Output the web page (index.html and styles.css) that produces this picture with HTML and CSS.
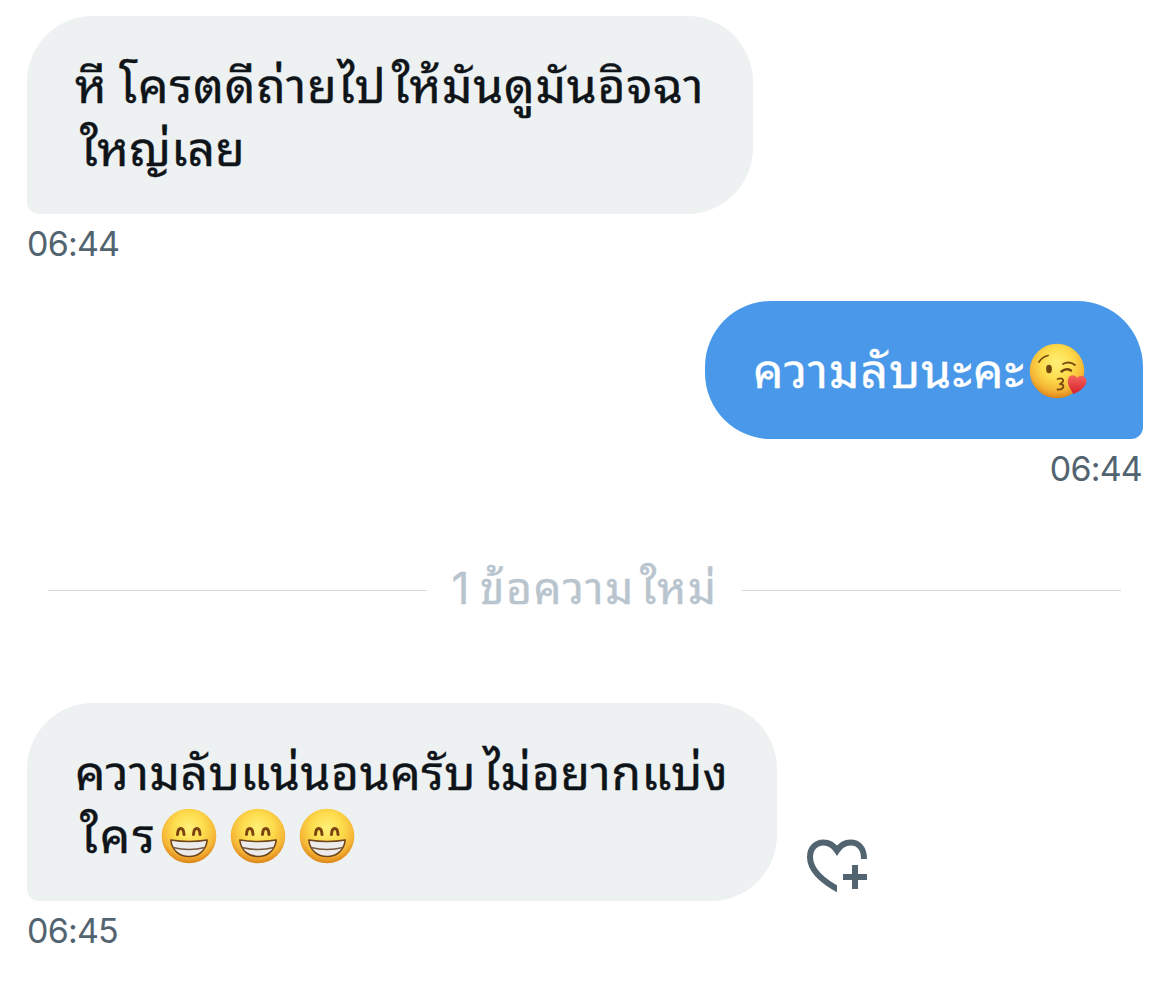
FILE: index.html
```
<!DOCTYPE html>
<html lang="th">
<head>
    <meta charset="UTF-8">
    <meta name="viewport" content="width=device-width, initial-scale=1.0">
    <title>ข้อความ</title>
    <link rel="stylesheet" href="styles.css">
</head>
<body>
    <!-- emoji symbols -->
    <svg class="symbols" width="0" height="0">
        <defs>
            <radialGradient id="face" cx="50%" cy="36%" r="64%">
                <stop offset="0" stop-color="#fff07a"/>
                <stop offset="0.45" stop-color="#fddc4c"/>
                <stop offset="0.78" stop-color="#f5b637"/>
                <stop offset="1" stop-color="#dd8419"/>
            </radialGradient>
            <linearGradient id="heart" x1="0" y1="0" x2="0" y2="1">
                <stop offset="0" stop-color="#f8645c"/>
                <stop offset="1" stop-color="#d3212d"/>
            </linearGradient>
            <clipPath id="heart-cut">
                <path d="M0 0H62V30H30V54H0Z"/>
            </clipPath>
            <symbol id="grin" viewBox="0 0 56 56">
                <circle cx="28" cy="28" r="27.3" fill="url(#face)"/>
                <path d="M16.5 26.5c.5-8 6-8 6.5 0M32.5 26.5c.5-8 6-8 6.5 0" fill="none" stroke="#7b4310" stroke-width="3" stroke-linecap="round"/>
                <path d="M9.8 32Q28 35 46.2 32C45 43 37 48.5 28 48.5S11 43 9.8 32Z" fill="#ececec" stroke="#70451b" stroke-width="1.6" stroke-linejoin="round"/>
                <path d="M12 39.5Q28 43.5 44 39.5" fill="none" stroke="#77583d" stroke-width="1.5"/>
            </symbol>
            <symbol id="kiss" viewBox="0 0 58 56">
                <circle cx="28" cy="28" r="27.3" fill="url(#face)"/>
                <path d="M10 19Q13 14 19 12.5M34 21Q40 17.5 46 22" fill="none" stroke="#7b4a12" stroke-width="1.8" stroke-linecap="round"/>
                <ellipse cx="20" cy="26" rx="2.9" ry="4.2" fill="#714510"/>
                <path d="M32.5 28.5Q37 24.5 42 27.5" fill="none" stroke="#714510" stroke-width="2.5" stroke-linecap="round"/>
                <path d="M28.5 36C35 34 36 38.5 31 41C36.5 41 35 47 28.5 46.5" fill="none" stroke="#7b4a12" stroke-width="1.8" stroke-linecap="round" stroke-linejoin="round"/>
                <path d="M44.5 51C42 47 38 42 39 36.5C40 31.5 46 31 48 35C51 31.5 57 33 57.5 38C57.5 43.5 50 49 44.5 51Z" fill="url(#heart)"/>
            </symbol>
        </defs>
    </svg>

    <main class="conversation">
        <section class="message received">
            <div class="bubble">
                <p class="line line-a"><span>หี โครตดีถ่ายไป<span class="lead">ให้มันดูมันอิจฉา</span></span></p>
                <p class="line line-b"><span class="lead">ใหญ่เลย</span></p>
            </div>
            <time class="time">06:44</time>
        </section>

        <section class="message sent">
            <div class="bubble">
                <p class="line"><span>ความลับนะคะ</span><svg class="emoji kiss" role="img" aria-label="😘"><use href="#kiss"/></svg></p>
            </div>
            <time class="time">06:44</time>
        </section>

        <div class="divider"><span>1 ข้อความ<span class="lead">ใหม่</span></span></div>

        <section class="message received latest">
            <div class="row">
                <div class="bubble">
                    <p class="line line-c"><span>ความลับแน่นอนครับ ไม่อยากแบ่ง</span></p>
                    <p class="line line-d"><span class="lead">ใคร</span><svg class="emoji" role="img" aria-label="😁"><use href="#grin"/></svg><svg class="emoji" role="img" aria-label="😁"><use href="#grin"/></svg><svg class="emoji" role="img" aria-label="😁"><use href="#grin"/></svg></p>
                </div>
                <button class="react" aria-label="+">
                    <svg viewBox="0 0 62 54" width="62" height="54" fill="none" stroke="#536471" stroke-width="6">
                        <path clip-path="url(#heart-cut)" d="M36 53C18 44 3 32 3 18C3 9 9 3.500 16.500 3.500C22.500 3.500 27 7 30 11.500C33 7 37.500 3.500 43.500 3.500C51.500 3.500 57 9 57 20"/>
                        <path d="M48 26V50M36 38H60"/>
                    </svg>
                </button>
            </div>
            <time class="time">06:45</time>
        </section>
    </main>
</body>
</html>
```
FILE: styles.css
```
* {
    box-sizing: border-box;
}
body {
    margin: 0;
    background: #fff;
    color: #0f1419;
    font-family: Inter, Thonburi, "Noto Sans Thai Looped", Loma, Garuda, Waree, Umpush, "Noto Sans", sans-serif;
}
.symbols {
    display: block;
}
.conversation {
    display: flex;
    flex-direction: column;
    padding: 16px 27px 0;
}
.message {
    display: flex;
    flex-direction: column;
    align-items: flex-start;
}
.bubble {
    width: 726px;
    padding: 38px 48px 34px;
    background: #edf1f2;
    border-radius: 66px 66px 66px 12px;
}
.line {
    display: flex;
    align-items: center;
    height: 63px;
    margin: 0;
    font-size: 48px;
    line-height: 63px;
    letter-spacing: 1.1px;
    white-space: nowrap;
    -webkit-text-stroke: 0.4px currentColor;
}
.lead {
    margin-left: 5px;
}
.line-a {
    letter-spacing: 1px;
    word-spacing: -3px;
}
.line-a .lead {
    letter-spacing: 0.8px;
}
.line-b {
    letter-spacing: 0.2px;
}
.line-c {
    letter-spacing: 0.6px;
    word-spacing: -7px;
}
.line-d {
    letter-spacing: 2px;
}
.line-d .lead {
    margin-right: 4px;
}
.time {
    height: 60px;
    color: #536471;
    font-size: 34px;
    line-height: 60px;
    letter-spacing: -0.8px;
}
.sent {
    align-items: flex-end;
    margin-top: 27px;
}
.sent .bubble {
    width: 438px;
    height: 138px;
    background: #4998e9;
    color: #fff;
    border-radius: 66px 66px 12px 66px;
}
.sent .time {
    margin-right: 1px;
}
.emoji {
    width: 56px;
    height: 56px;
    margin-right: 13px;
    flex: none;
}
.kiss {
    width: 58px;
    margin-left: 4px;
}
.divider {
    display: flex;
    align-items: center;
    gap: 24px;
    height: 84px;
    margin: 49px 22px 0 21px;
    color: #b9c5ce;
    font-size: 44px;
    letter-spacing: 1.7px;
    word-spacing: -5px;
    white-space: nowrap;
    -webkit-text-stroke: 0.4px currentColor;
}
.divider > span {
    padding-bottom: 12px;
}
.divider::before,
.divider::after {
    content: "";
    flex: 1;
    height: 1px;
    background: #d5d9df;
}
.latest {
    margin-top: 71px;
}
.latest .bubble {
    width: 750px;
}
.row {
    display: flex;
    align-items: flex-end;
    gap: 30px;
}
.react {
    padding: 0;
    margin-bottom: 8px;
    border: 0;
    background: none;
}
.react svg {
    display: block;
}
```
